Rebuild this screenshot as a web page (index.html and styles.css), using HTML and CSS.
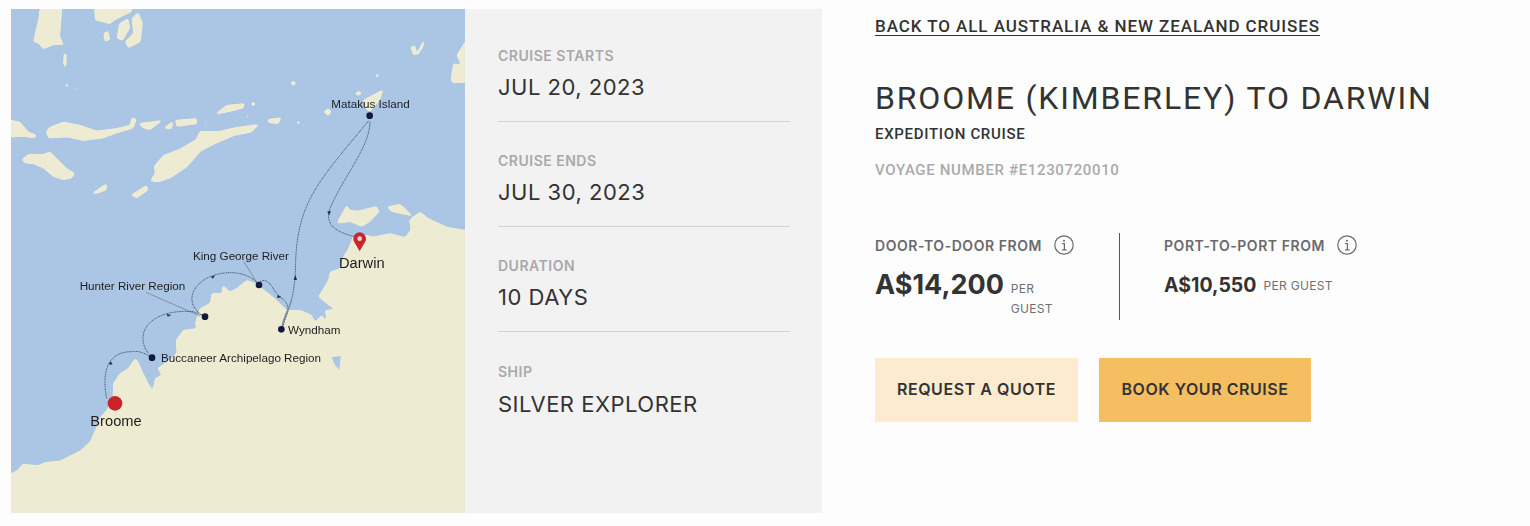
FILE: index.html
```html
<!DOCTYPE html>
<html lang="en">
<head>
<meta charset="utf-8">
<title>Broome (Kimberley) to Darwin</title>
<link rel="stylesheet" href="styles.css">
</head>
<body>
<main class="page">
  <div class="map">
    <svg class="map-svg" viewBox="33 27 1362 1512" width="454" height="504" xmlns="http://www.w3.org/2000/svg">
      <defs>
        <filter id="round" filterUnits="userSpaceOnUse" x="-100" y="-100" width="1700" height="1800">
          <feGaussianBlur stdDeviation="3"/>
          <feComponentTransfer>
            <feFuncA type="linear" slope="4" intercept="-1.3"/>
          </feComponentTransfer>
        </filter>
      </defs>
      <rect x="33" y="27" width="1362" height="1512" class="sea"/>
      <g class="land" filter="url(#round)">
        <path d="M-40 1425 L33 1420 L50 1412 L68 1392 L115 1396 L135 1387 L180 1382 L240 1352 L270 1325 L290 1280 L298 1255 L322 1228 L338 1190 L340 1150 L360 1120 L385 1105 L405 1075 L415 1085 L425 1110 L445 1150 L458 1172 L465 1135 L485 1125 L472 1105 L495 1090 L530 1060 L528 1020 L550 990 L590 985 L585 970 L600 925 L630 910 L635 880 L665 880 L668 855 L690 875 L710 865 L740 840 L765 850 L800 875 L830 900 L860 930 L900 930 L935 945 L945 965 L965 945 L980 965 L975 930 L1005 928 L985 915 L955 890 L985 840 L990 815 L1020 805 L1030 770 L1045 745 L1060 708 L1100 705 L1120 710 L1170 700 L1215 712 L1232 690 L1228 660 L1260 635 L1285 655 L1340 680 L1395 690 L1500 700 L1500 1600 L-40 1600 Z"/>
        <path d="M1010 668 L1040 615 L1050 630 L1075 632 L1130 618 L1138 635 L1110 665 L1085 680 L1050 665 L1025 670 Z"/>
        <path d="M1160 620 L1200 612 L1215 625 L1240 650 L1222 645 L1195 640 L1175 635 Z"/>
        <path d="M450 543 L465 520 L462 498 L490 466 L540 446 L588 418 L600 393 L660 393 L700 383 L778 372 L755 397 L700 408 L640 434 L602 454 L562 500 L512 534 L475 547 Z"/>
        <path d="M138 395 L150 380 L190 365 L240 375 L290 392 L350 385 L390 375 L395 352 L410 358 L400 385 L350 400 L310 415 L250 422 L200 412 L145 415 Z"/>
        <path d="M65 478 L85 463 L130 462 L150 455 L175 480 L200 505 L225 520 L215 535 L190 540 L160 530 L130 505 L100 492 L75 490 Z"/>
        <path d="M-20 360 L33 360 L60 365 L85 395 L110 405 L105 415 L70 410 L33 412 L-20 415 Z"/>
        <path d="M648 340 L680 315 L735 310 L730 325 L690 335 L650 343 Z"/>
        <path d="M525 360 L590 355 L592 372 L530 380 Z"/>
        <path d="M415 370 L490 360 L450 390 L430 385 Z"/>
        <path d="M490 385 L520 362 L515 388 Z"/>
        <path d="M802 358 L845 352 L835 372 L805 368 Z"/>
        <path d="M272 582 L320 550 L320 570 L295 580 Z"/>
        <path d="M392 585 L440 555 L445 570 L410 595 Z"/>
        <path d="M1090 300 L1150 268 L1140 300 L1110 335 L1095 325 Z"/>
        <path d="M970 335 L985 325 L995 335 L985 348 Z"/>
        <path d="M1065 278 L1080 272 L1085 285 L1068 286 Z"/>
        <circle cx="880" cy="250" r="7"/>
        <path d="M100 125 L105 100 L115 60 L125 -20 L190 -20 L182 80 L180 110 L192 135 L160 135 L130 148 L115 130 Z"/>
        <path d="M280 -20 L400 -20 L395 35 L345 60 L330 72 L285 60 Z"/>
        <path d="M358 70 L385 55 L390 85 L368 122 L350 115 Z"/>
        <path d="M395 55 L415 37 L428 70 L422 125 L385 145 L375 125 L400 100 Z"/>
        <path d="M310 100 L325 92 L330 120 L315 125 Z"/>
        <path d="M192 155 L200 165 L198 210 L190 190 Z"/>
        <path d="M1232 140 L1245 135 L1250 160 L1240 168 Z"/>
        <path d="M1250 160 L1275 112 L1270 140 L1252 168 Z"/>
        <path d="M1500 125 L1395 125 L1370 165 L1385 200 L1500 205 Z"/>
        <path d="M1360 190 L1500 220 L1500 240 L1360 250 L1352 240 Z"/>
        <path d="M1128 218 L1136 225 L1135 235 L1128 230 Z"/>
        <circle cx="1134" cy="50" r="3"/>
        <circle cx="201" cy="256" r="5"/>
        <circle cx="230" cy="268" r="4"/>
        <circle cx="297" cy="269" r="3"/>
        <circle cx="760" cy="312" r="6"/>
        <circle cx="617" cy="366" r="4"/>
        <circle cx="895" cy="368" r="5"/>
        <circle cx="742" cy="350" r="4"/>
        <circle cx="460" cy="120" r="3"/>
        <circle cx="472" cy="135" r="2.5"/>
        <circle cx="482" cy="151" r="2.5"/>
      </g>
      <g class="soft">
        <path class="sea-fill" d="M995 1072 L1022 1068 L1018 1110 L1005 1095 Z"/>
        <g class="lead">
          <line x1="438" y1="877" x2="600" y2="948"/>
          <line x1="732" y1="785" x2="772" y2="850"/>
        </g>
        <g class="route">
          <path d="M320 1195 C305 1120 320 1055 395 1055 C420 1050 440 1065 452 1070"/>
          <path d="M445 1060 C400 1000 450 925 580 935 L612 948"/>
          <path d="M605 945 C540 900 590 820 690 818 C735 818 760 835 775 852"/>
          <path d="M780 845 C810 830 815 870 840 890 C860 905 870 920 860 945 L845 985"/>
          <path d="M848 985 C860 920 885 920 887 780 C895 600 960 540 1106 362"/>
          <path d="M1110 365 C1110 440 1030 530 990 625 C975 670 1000 695 1065 710"/>
        </g>
        <path class="route-heavy" d="M846 980 C850 950 870 920 874 900"/>
        <g class="arrows">
          <path d="M332 304 L338 314 L326 313 Z" transform="translate(0 780)"/>
          <path d="M500 942 L514 945 L503 950 Z"/>
          <path d="M633 830 L646 826 L638 836 Z"/>
          <path d="M832 885 L845 892 L832 894 Z"/>
          <path d="M886 825 L891 840 L881 840 Z"/>
          <path d="M982 634 L993 634 L987 646 Z"/>
        </g>
        <g class="stops">
          <circle cx="1109" cy="347" r="10"/>
          <circle cx="777" cy="855" r="10"/>
          <circle cx="615" cy="950" r="10"/>
          <circle cx="844" cy="988" r="10"/>
          <circle cx="456" cy="1073" r="10"/>
        </g>
        <circle class="start" cx="345" cy="1210" r="22"/>
        <path class="pin" d="M1079 754 C1068 732 1060 726 1060 716 A19 19 0 0 1 1098 716 C1098 726 1090 732 1079 754 Z"/>
        <circle class="pin-eye" cx="1079" cy="716" r="7"/>
        <text class="label" x="994" y="325">Matakus Island</text>
        <text class="label" x="579" y="780">King George River</text>
        <text class="label" x="239" y="870">Hunter River Region</text>
        <text class="label" x="864" y="1002">Wyndham</text>
        <text class="label" x="483" y="1086">Buccaneer Archipelago Region</text>
        <text class="label-big" x="1017" y="805">Darwin</text>
        <text class="label-big" x="271" y="1278">Broome</text>
      </g>
    </svg>
  </div>

  <aside class="facts">
    <div class="fact">
      <div class="fact-label">CRUISE STARTS</div>
      <div class="fact-value">JUL 20, 2023</div>
    </div>
    <div class="fact">
      <div class="fact-label">CRUISE ENDS</div>
      <div class="fact-value">JUL 30, 2023</div>
    </div>
    <div class="fact">
      <div class="fact-label">DURATION</div>
      <div class="fact-value">10 DAYS</div>
    </div>
    <div class="fact fact-last">
      <div class="fact-label">SHIP</div>
      <div class="fact-value">SILVER EXPLORER</div>
    </div>
  </aside>

  <section class="detail">
    <a class="back" href="#">BACK TO ALL AUSTRALIA &amp; NEW ZEALAND CRUISES</a>
    <h1 class="title">BROOME (KIMBERLEY) TO DARWIN</h1>
    <div class="type">EXPEDITION CRUISE</div>
    <div class="voyage">VOYAGE NUMBER #E1230720010</div>

    <div class="prices">
      <div class="price price-door">
        <div class="price-label">DOOR-TO-DOOR FROM
          <svg class="info" viewBox="0 0 20 20" width="20" height="20"><circle cx="10" cy="10" r="9.2"/><circle class="info-dot" cx="10" cy="5.8" r="1"/><path d="M8.2 8.7H10.4V14.6M8 14.8H12.6"/></svg>
        </div>
        <div class="price-row">
          <span class="amount">A$14,200</span>
          <span class="per per-narrow">PER GUEST</span>
        </div>
      </div>
      <div class="price price-port">
        <div class="price-label">PORT-TO-PORT FROM
          <svg class="info" viewBox="0 0 20 20" width="20" height="20"><circle cx="10" cy="10" r="9.2"/><circle class="info-dot" cx="10" cy="5.8" r="1"/><path d="M8.2 8.7H10.4V14.6M8 14.8H12.6"/></svg>
        </div>
        <div class="price-row price-row-small">
          <span class="amount amount-small">A$10,550</span>
          <span class="per">PER GUEST</span>
        </div>
      </div>
    </div>

    <div class="actions">
      <a class="btn btn-light" href="#">REQUEST A QUOTE</a>
      <a class="btn btn-solid" href="#">BOOK YOUR CRUISE</a>
    </div>
  </section>
</main>
</body>
</html>
```

FILE: styles.css
```css
* { box-sizing: border-box; }

html, body {
  margin: 0;
  padding: 0;
  height: 526px;
  overflow: hidden;
  background: #fdfdfd;
}

body {
  font-family: Inter, "Liberation Sans", sans-serif;
  color: #333333;
}

.page {
  display: flex;
  align-items: flex-start;
  padding: 9px 0 0 11px;
}

.map {
  width: 454px;
  height: 504px;
  flex: none;
  overflow: hidden;
}

.map-svg { display: block; }

.soft { filter: blur(0.3px); }
.sea { fill: #abc6e4; }
.sea-fill { fill: #abc6e4; }
.land { fill: #eeebd3; }
.lead { stroke: #6c7686; stroke-width: 2; fill: none; }
.route { stroke: #2b3a5c; stroke-width: 2.4; stroke-dasharray: 3 2; fill: none; }
.route-heavy { stroke: #7d92b5; stroke-width: 4; fill: none; }
.arrows { fill: #1f2c50; }
.stops { fill: #12183f; }
.start { fill: #cc2229; }
.pin { fill: #c9252f; }
.pin-eye { fill: #e6d9cf; }

.label {
  font-family: "Liberation Sans", Arial, sans-serif;
  font-size: 35px;
  fill: #1d1d1f;
}

.label-big {
  font-family: "Liberation Sans", Arial, sans-serif;
  font-size: 44px;
  fill: #1d1d1f;
}

.facts {
  width: 357px;
  height: 504px;
  flex: none;
  background: #f2f2f2;
  padding: 38px 32px 0 33px;
}

.fact {
  height: 105px;
  border-bottom: 1px solid #d2d2d2;
  padding-top: 30px;
}

.fact:first-child {
  height: 75px;
  padding-top: 0;
}

.fact-last {
  border-bottom: 0;
  padding-top: 31px;
}

.fact-last .fact-value { margin-top: 8px; }

.fact-label {
  font-size: 14px;
  line-height: 18px;
  font-weight: 600;
  letter-spacing: 0.5px;
  color: #a9a9ab;
}

.fact-value {
  margin-top: 7px;
  font-size: 22px;
  line-height: 30px;
  letter-spacing: 0.5px;
  color: #333333;
}

.detail {
  margin-left: 53px;
  flex: none;
  width: 640px;
}

.back {
  display: inline-block;
  margin-top: 8px;
  font-family: Roboto, Inter, sans-serif;
  font-size: 17px;
  line-height: 18px;
  font-weight: 500;
  letter-spacing: 0.93px;
  color: #333333;
  text-decoration: none;
  border-bottom: 1px solid #333333;
}

.title {
  margin: 42px 0 0;
  font-family: Roboto, Inter, sans-serif;
  font-size: 32px;
  line-height: 40px;
  font-weight: 400;
  letter-spacing: 1.83px;
  color: #333333;
  white-space: nowrap;
}

.type {
  margin-top: 7px;
  font-family: Roboto, Inter, sans-serif;
  font-size: 15px;
  line-height: 18px;
  font-weight: 500;
  letter-spacing: 0.68px;
  color: #333333;
}

.voyage {
  margin-top: 18px;
  font-family: Roboto, Inter, sans-serif;
  font-size: 15px;
  line-height: 18px;
  font-weight: 500;
  letter-spacing: 0.65px;
  color: #aaaaac;
}

.prices {
  display: flex;
  margin-top: 54px;
  height: 87px;
}

.price-door {
  width: 245px;
  border-right: 1px solid #555555;
}

.price-port { padding-left: 44px; }

.price-label {
  display: flex;
  align-items: center;
  height: 24px;
  font-size: 14px;
  font-weight: 600;
  letter-spacing: 0.55px;
  color: #6a6a6c;
}

.info {
  margin-left: 12px;
  fill: none;
  stroke: #6a6a6c;
  stroke-width: 1.2;
}

.info .info-dot {
  fill: #6a6a6c;
  stroke: none;
}

.price-row {
  display: flex;
  align-items: flex-start;
  margin-top: 11px;
}

.price-row-small { margin-top: 15px; }

.amount {
  font-size: 27px;
  line-height: 34px;
  font-weight: 700;
  letter-spacing: 0;
  color: #333333;
  white-space: nowrap;
}

.amount-small {
  font-size: 19.5px;
  line-height: 26px;
}

.per {
  margin-left: 7px;
  margin-top: 4px;
  font-size: 12px;
  line-height: 20px;
  letter-spacing: 0.3px;
  color: #6f6f71;
  white-space: nowrap;
}

.per-narrow {
  width: 50px;
  margin-top: 11px;
  white-space: normal;
}

.actions {
  display: flex;
  gap: 21px;
  margin-top: 38px;
}

.btn {
  display: flex;
  align-items: center;
  justify-content: center;
  height: 64px;
  padding-bottom: 2px;
  font-size: 16px;
  font-weight: 600;
  letter-spacing: 0.55px;
  color: #333333;
  text-decoration: none;
}

.btn-light { width: 203px; background: #fcebcf; }
.btn-solid { width: 212px; background: #f5be60; }
```
